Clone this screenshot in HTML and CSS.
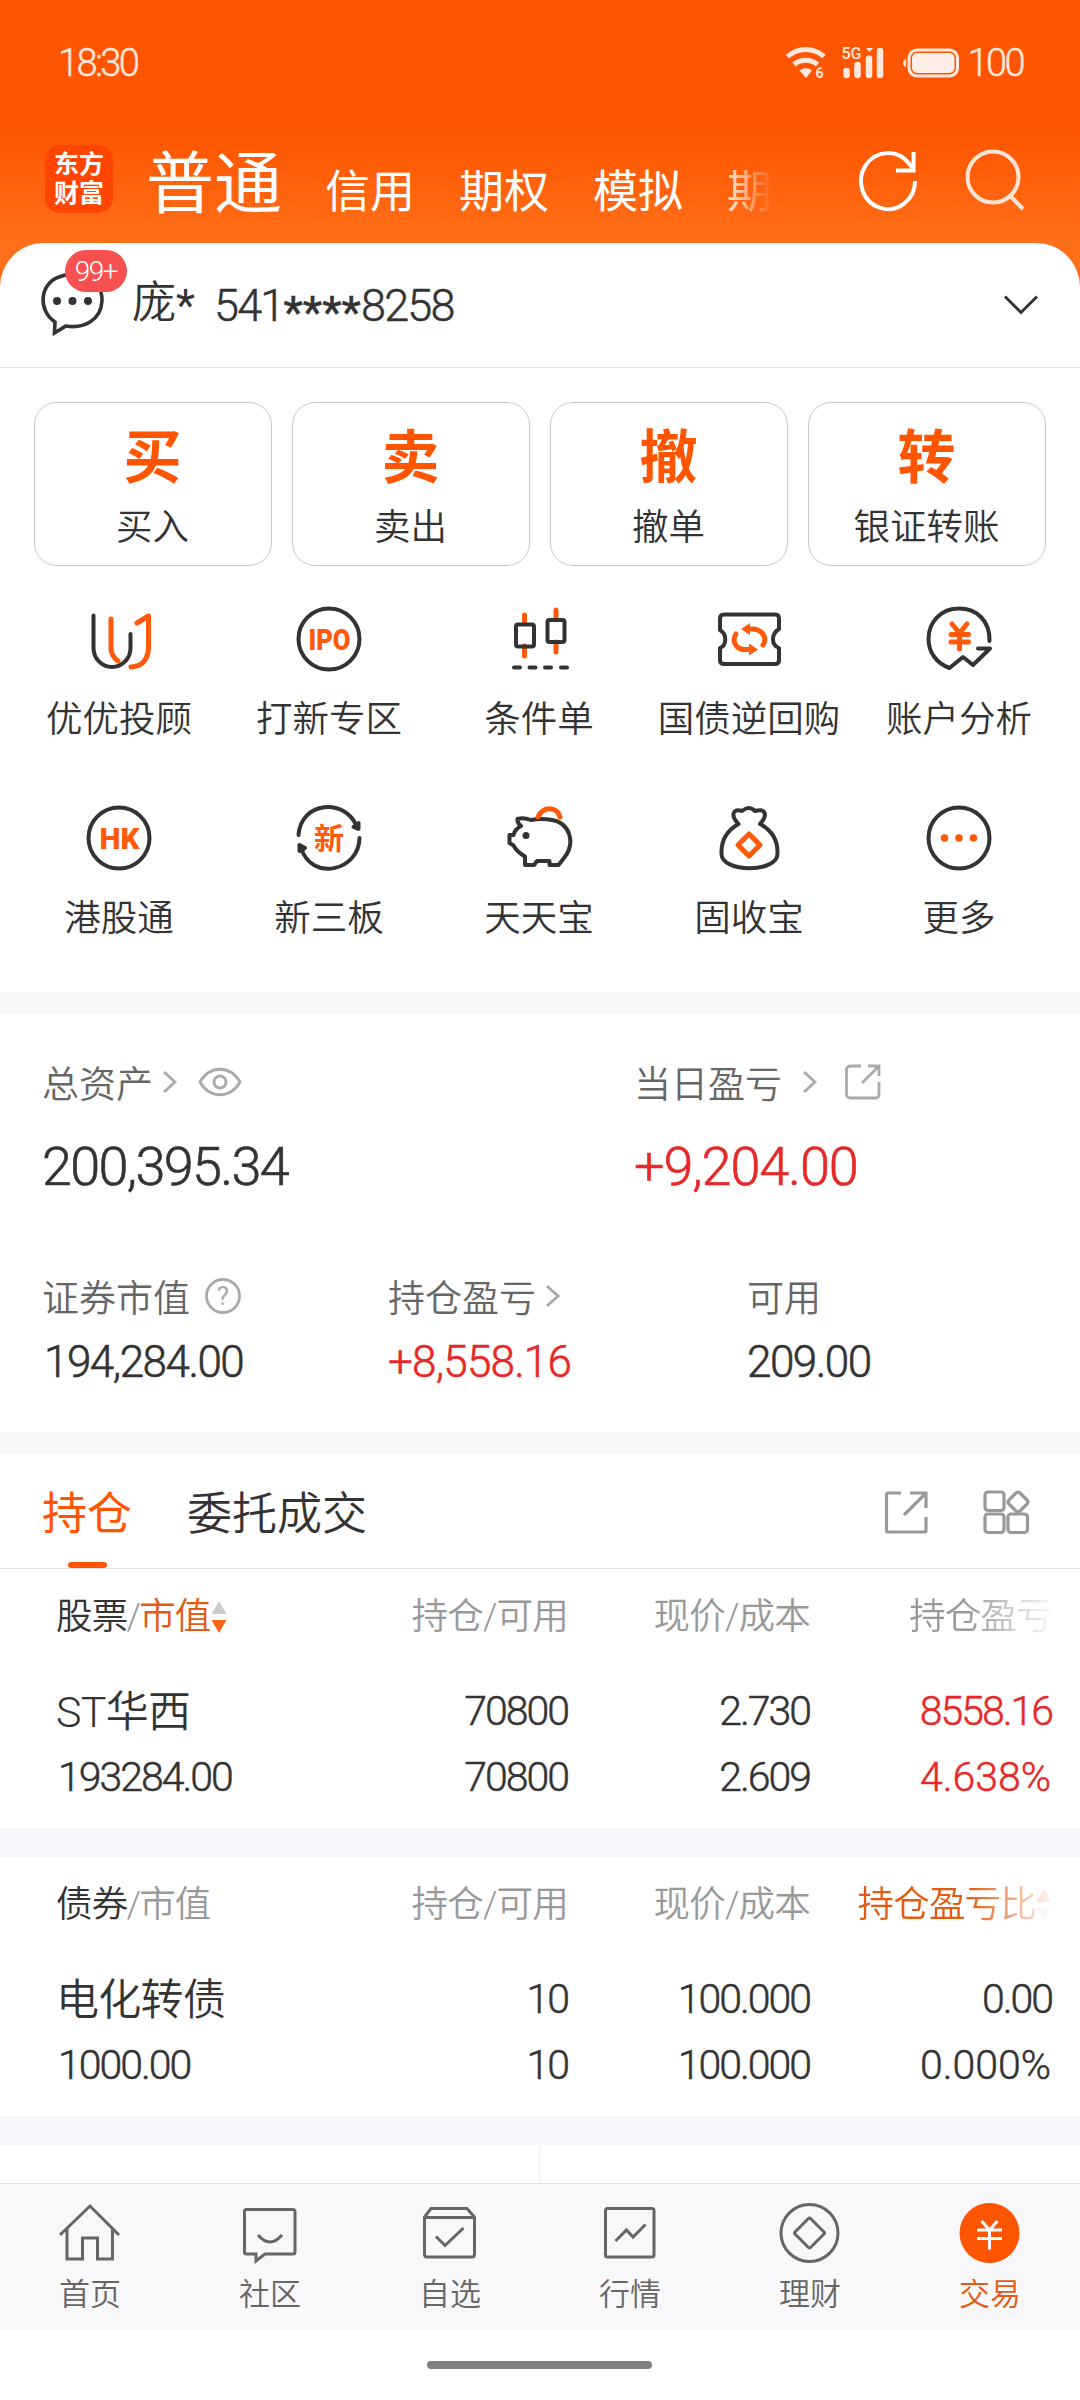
FILE: index.html
```html
<!DOCTYPE html>
<html lang="zh-CN">
<head>
    <meta charset="UTF-8">
    <meta name="viewport" content="width=device-width, initial-scale=1.0">
    <title>交易</title>
    <link rel="stylesheet" href="styles.css">
</head>
<body>
    <header class="header">
        <div class="status-bar">
            <span class="time">18:30</span>
            <div class="status-icons">
                <svg class="wifi" width="40" height="32" viewBox="0 0 40 32">
                    <g fill="none" stroke="#ffe9de" stroke-width="5">
                        <path d="M1.5 9.5A27 27 0 0 1 38 9.5"/>
                        <path d="M8 17.5A18 18 0 0 1 31.500 17.5"/>
                    </g>
                    <path d="M13.500 23.500Q20 19 26 23.500L20 31Z" fill="#ffe9de"/>
                    <text x="29.500" y="31" class="wifi-num">6</text>
                </svg>
                <svg class="signal" width="42" height="32" viewBox="0 0 42 32">
                    <text x="-.5" y="12" class="net">5G</text>
                    <path d="M24 1h7l-3.500 4z" fill="#ffe9de"/>
                    <g stroke="#ffe9de" stroke-width="6.500" stroke-linecap="round">
                        <path d="M4.500 24v4M15.500 18v10M27 11.500v16.500M38 4v24"/>
                    </g>
                </svg>
                <svg class="battery" width="57" height="30" viewBox="0 0 57 30">
                    <path d="M3 11v8q-3-1-3-4t3-4z" fill="#ffe9de"/>
                    <rect x="6" y="2" width="48.500" height="26" rx="8" fill="none" stroke="#ffe9de" stroke-width="3"/>
                    <rect x="9" y="5" width="42.500" height="20" rx="5" fill="#ffede6"/>
                </svg>
                <span class="time">100</span>
            </div>
        </div>
        <div class="top-nav">
            <div class="logo">东方<br>财富</div>
            <nav class="markets">
                <span class="market current">普通</span>
                <span class="market">信用</span>
                <span class="market">期权</span>
                <span class="market">模拟</span>
                <span class="market fade">期</span>
            </nav>
            <svg class="refresh" width="60" height="62" viewBox="0 0 60 62" fill="none" stroke="#fff" stroke-width="4">
                <path d="M57 32A27 28 0 1 1 51 14.500L56 20.500"/>
                <path d="M55.500 3V21.500H38"/>
            </svg>
            <svg class="search" width="60" height="62" viewBox="0 0 60 62" fill="none" stroke="#ffe4d6" stroke-width="4">
                <circle cx="28" cy="28" r="25.500"/>
                <path d="M45.500 47L58 60"/>
            </svg>
        </div>
    </header>

    <main class="panel">
        <div class="account">
            <div class="message">
                <svg width="64" height="64" viewBox="0 0 64 64">
                    <path d="M14 49C-3 38-2 11 18 4C40-5 62 8 61 28C60 47 43 56 25 53L13.500 60Z" fill="none" stroke="#333" stroke-width="3.600"/>
                    <g fill="#333"><circle cx="16" cy="28" r="4"/><circle cx="31.500" cy="28" r="4"/><circle cx="47" cy="28" r="4"/></g>
                </svg>
                <span class="badge">99+</span>
            </div>
            <span class="account-name">庞<i>*</i></span>
            <span class="account-no">541<i>****</i>8258</span>
            <svg class="chevron" width="36" height="22" viewBox="0 0 36 22"><path d="M2 2.500L18 18.500L34 2.500" fill="none" stroke="#333" stroke-width="3"/></svg>
        </div>

        <div class="trade-cards">
            <div class="trade-card"><b>买</b><span>买入</span></div>
            <div class="trade-card"><b>卖</b><span>卖出</span></div>
            <div class="trade-card"><b>撤</b><span>撤单</span></div>
            <div class="trade-card"><b>转</b><span>银证转账</span></div>
        </div>

        <div class="menu">
            <div class="menu-item">
                <svg viewBox="0 0 72 72" class="icon">
                    <path d="M10.500 12.500V45A18.500 19 0 0 0 47.500 45V31"/>
                    <path class="o" d="M28 16V45Q28 53 35 58M54 20L65.500 13V44Q65 63 48 64"/>
                </svg>
                <span>优优投顾</span>
            </div>
            <div class="menu-item">
                <svg viewBox="0 0 72 72" class="icon">
                    <circle cx="36" cy="36" r="30.500"/>
                    <text x="36.500" y="47" textLength="42" lengthAdjust="spacingAndGlyphs">IPO</text>
                </svg>
                <span>打新专区</span>
            </div>
            <div class="menu-item">
                <svg viewBox="0 0 72 72" class="icon">
                    <path class="o" d="M21.500 12V20M21.500 43V53M53 7V16M53 39V49"/>
                    <rect x="13" y="21.500" width="18" height="22" rx="2"/>
                    <rect x="44.500" y="17" width="17" height="22" rx="2"/>
                    <path d="M11 64.500h6M26.500 64.500h6M42 64.500h6M58 64.500h6"/>
                </svg>
                <span>条件单</span>
            </div>
            <div class="menu-item">
                <svg viewBox="0 0 72 72" class="icon">
                    <path d="M11 11.500H62Q66 11.500 66 15.500V26C58 31 58 42 66 45V57Q66 61 62 61H11Q7 61 7 57V45C14 42 14 31 7 27V15.500Q7 11.500 11 11.500Z"/>
                    <path class="o" d="M34 26H40C51 27 54 36 50 42M23 31C18 39 24 47 32 46.500H37"/>
                    <path class="f" d="M28 26L37 20V32ZM45 46.500L36 40.500V52.500Z"/>
                </svg>
                <span>国债逆回购</span>
            </div>
            <div class="menu-item">
                <svg viewBox="0 0 72 72" class="icon">
                    <path d="M66.500 38C67 18 54 5.500 36 5.500C18 5.500 5.500 19 5.500 36C5.500 49 13 60 26.500 65L40 54L50 62L67 45.500H55"/>
                    <path class="o" d="M29 21L36.500 30L44 21M28 31.500H45.500M28 39H45.500M36.500 30V46"/>
                </svg>
                <span>账户分析</span>
            </div>
            <div class="menu-item">
                <svg viewBox="0 0 72 72" class="icon">
                    <circle cx="36" cy="36" r="30.500"/>
                    <text x="36.500" y="47" textLength="40" lengthAdjust="spacingAndGlyphs">HK</text>
                </svg>
                <span>港股通</span>
            </div>
            <div class="menu-item">
                <svg viewBox="0 0 72 72" class="icon">
                    <path d="M5.500 33C8 -1 52-4 63.500 24M66.500 36C66 69 19 80 8 46"/>
                    <path d="M60.500 25L65.500 21V27ZM6.500 43V49L12 46Z"/>
                    <text x="36" y="47" class="cn">新</text>
                </svg>
                <span>新三板</span>
            </div>
            <div class="menu-item">
                <svg viewBox="0 0 72 72" class="icon">
                    <path d="M14.500 17Q20 15 28 18Q38 16 49 18C67 21 73 41 61 56L55.500 63H46.500V59H34L31 63H22V54.500Q14 50 10.500 43.500L6.500 41V33H10.500Q12 27 18 24Q14 21 14.500 17Z"/>
                    <path class="o" d="M35 15C40 4 54 4 57 15"/>
                    <circle cx="23" cy="33.500" r="3.500" class="d"/>
                </svg>
                <span>天天宝</span>
            </div>
            <div class="menu-item">
                <svg viewBox="0 0 72 72" class="icon">
                    <path d="M25.500 22C17 13 20 6 29 9Q36 3 42 9C53 6 55 13 47 22C60 29 65 40 64.500 52C64 71 9 71 8.500 52C8 40 13 29 25.500 22Z"/>
                    <path class="o" d="M36 32L47 43L36 54L25 43Z"/>
                </svg>
                <span>固收宝</span>
            </div>
            <div class="menu-item">
                <svg viewBox="0 0 72 72" class="icon">
                    <circle cx="36" cy="36" r="30.500"/>
                    <circle class="f" cx="21.500" cy="36" r="3.800"/>
                    <circle class="f" cx="36" cy="36" r="3.800"/>
                    <circle class="f" cx="50.500" cy="36" r="3.800"/>
                </svg>
                <span>更多</span>
            </div>
        </div>
    </main>

    <section class="assets">
        <div class="asset-row main-row">
            <div class="asset">
                <div class="asset-label">总资产
                    <svg class="arrow" width="16" height="24" viewBox="0 0 16 24"><path d="M2 2L13 12L2 22"/></svg>
                    <svg class="eye" width="44" height="32" viewBox="0 0 44 32"><path d="M2 16C12-1 32-1 42 16C32 33 12 33 2 16Z"/><circle cx="22" cy="16" r="6"/></svg>
                </div>
                <div class="asset-value">200,395.34</div>
            </div>
            <div class="asset">
                <div class="asset-label">当日盈亏
                    <svg class="arrow wide" width="16" height="24" viewBox="0 0 16 24"><path d="M2 2L13 12L2 22"/></svg>
                    <svg class="share" width="38" height="38" viewBox="0 0 38 38"><path d="M17 3H7Q2.500 3 2.500 7V31Q2.500 35 7 35H31Q35 35 35 31V19M24 3H35V13M35 3L18 20"/></svg>
                </div>
                <div class="asset-value red">+9,204.00</div>
            </div>
        </div>
        <div class="asset-row sub-row">
            <div class="asset">
                <div class="asset-label">证券市值
                    <svg class="help" width="38" height="38" viewBox="0 0 38 38"><circle cx="19" cy="19" r="16.500"/><text x="19" y="28">?</text></svg>
                </div>
                <div class="asset-value first">194,284.00</div>
            </div>
            <div class="asset">
                <div class="asset-label">持仓盈亏
                    <svg class="arrow" width="16" height="24" viewBox="0 0 16 24"><path d="M2 2L13 12L2 22"/></svg>
                </div>
                <div class="asset-value red">+8,558.16</div>
            </div>
            <div class="asset">
                <div class="asset-label">可用</div>
                <div class="asset-value">209.00</div>
            </div>
        </div>
    </section>

    <section class="holdings">
        <div class="tabs">
            <span class="tab active">持仓</span>
            <span class="tab">委托成交</span>
            <svg class="tab-share" width="44" height="44" viewBox="0 0 44 44"><path d="M17 3H4Q2.500 3 2.500 4.500V40.500Q2.500 42 4 42H40.500Q42 42 42 40.500V27M26 3H42V18M42 3L20 25"/></svg>
            <svg class="tab-grid" width="48" height="46" viewBox="0 0 48 46">
                <rect x="3" y="3" width="19" height="18.500" rx="3"/><rect x="3" y="25" width="19" height="18.500" rx="3"/><rect x="26" y="25" width="19.500" height="18.500" rx="3"/>
                <path d="M34 4Q36 2 38 4L45 11Q47 13 45 15L38 22Q36 24 34 22L27 15Q25 13 27 11Z"/>
            </svg>
        </div>
        <div class="table">
            <div class="row head">
                <div><span class="dark">股票</span><span class="slash">/</span><span class="orange">市值</span><svg class="sort" width="16" height="34" viewBox="0 0 16 34"><path d="M8 1L15.500 14H.5Z" fill="#ccc"/><path d="M8 33L15.500 20H.5Z" fill="#f9641a"/></svg></div>
                <div>持仓/可用</div>
                <div>现价/成本</div>
                <div class="fade-right">持仓盈亏</div>
            </div>
            <div class="row">
                <div class="name">ST华西</div><div>70800</div><div>2.730</div><div class="red">8558.16</div>
            </div>
            <div class="row second">
                <div class="amount">193284.00</div><div>70800</div><div>2.609</div><div class="percent red">4.638%</div>
            </div>
        </div>
        <div class="table">
            <div class="row head">
                <div><span class="dark">债券</span><span class="slash">/</span>市值</div>
                <div>持仓/可用</div>
                <div>现价/成本</div>
                <div class="fade-right orange">持仓盈亏比<svg class="sort" width="16" height="34" viewBox="0 0 16 34"><path d="M8 1L15.500 14H.5Z" fill="#f9641a"/><path d="M8 33L15.500 20H.5Z" fill="#ccc"/></svg></div>
            </div>
            <div class="row">
                <div class="name">电化转债</div><div>10</div><div>100.000</div><div>0.00</div>
            </div>
            <div class="row second">
                <div class="amount">1000.00</div><div>10</div><div>100.000</div><div class="percent">0.000%</div>
            </div>
        </div>
        <div class="more-row"><div></div><div></div></div>
    </section>

    <footer class="tab-bar">
        <div class="bar-item">
            <svg viewBox="0 0 64 64"><path d="M2 34L32 5L61 34M9 28V58H24.500V37H39.500V58H54.500V28"/></svg>
            <span>首页</span>
        </div>
        <div class="bar-item">
            <svg viewBox="0 0 64 64"><path d="M8.500 8.500H55Q57 8.500 57 10.500V51Q57 53 55 53H27L18 60V53H8.500Q6.500 53 6.500 51V10.500Q6.500 8.500 8.500 8.500ZM20 34Q32 48 44 34"/></svg>
            <span>社区</span>
        </div>
        <div class="bar-item">
            <svg viewBox="0 0 64 64"><path d="M13 7.500H49L56.500 16V53Q56.500 56 54 56H9Q6.500 56 6.500 53V16ZM6.500 16.500H56.500M18 35.500L27 44.500L45.500 27"/></svg>
            <span>自选</span>
        </div>
        <div class="bar-item">
            <svg viewBox="0 0 64 64"><rect x="7.500" y="7.500" width="48.500" height="48.500" rx="2"/><path d="M17.500 40L28.500 29L35 36L47.500 23.500"/></svg>
            <span>行情</span>
        </div>
        <div class="bar-item">
            <svg viewBox="0 0 64 64"><circle cx="31.500" cy="32" r="28.500"/><rect x="20.500" y="21" width="22" height="22" rx="1.500" transform="rotate(45 31.500 32)"/></svg>
            <span>理财</span>
        </div>
        <div class="bar-item on">
            <svg viewBox="0 0 64 64"><circle cx="31.500" cy="32" r="30" fill="#f50" stroke="none"/><path stroke="#fff" d="M23.500 20L31.500 29L39.500 20M19 29H44M19 37.500H44M31.500 29V48.500"/></svg>
            <span>交易</span>
        </div>
    </footer>
    <div class="home-indicator"></div>
</body>
</html>
```
FILE: styles.css
```css
* {
    box-sizing: border-box;
}

body {
    margin: 0;
    width: 1080px;
    height: 2400px;
    overflow: hidden;
    background-color: #fff;
    color: #333;
    font-family: Roboto, "Noto Sans CJK SC", sans-serif;
    font-weight: 350;
}

svg {
    display: block;
    flex-shrink: 0;
    overflow: visible;
}

i {
    font-style: normal;
}

.red {
    color: #e62828;
}

.orange {
    color: #e35a10;
}

.dark {
    color: #333;
}

/* header */
.header {
    height: 290px;
    background: linear-gradient(#ff5500 0, #ff5500 130px, #ff6f1a 243px);
}

.status-bar {
    display: flex;
    justify-content: space-between;
    height: 126px;
    padding: 0 57px 0 58px;
    color: #ffe9de;
}

.time {
    font-size: 38px;
    line-height: 126px;
    letter-spacing: -2.6px;
    -webkit-text-stroke: .4px;
}

.status-icons {
    display: flex;
    align-items: center;
}

.wifi {
    margin-right: 16px;
}

.signal {
    margin-right: 19px;
}

.battery {
    margin-right: 8px;
}

.wifi-num {
    font-size: 14px;
    font-weight: 700;
    fill: #ffe9de;
}

.net {
    font-size: 16px;
    font-weight: 500;
    fill: #ffe9de;
}

.top-nav {
    display: flex;
    align-items: flex-start;
    height: 117px;
    padding: 19px 0 0 45px;
    color: #fff;
}

.logo {
    width: 68px;
    height: 68px;
    padding-top: 5px;
    border-radius: 15px;
    background-color: #ff4500;
    font-size: 25px;
    font-weight: 700;
    line-height: 29px;
    text-align: center;
}

.markets {
    display: flex;
    align-items: baseline;
    width: 745px;
    padding: 6px 0 0 33px;
    line-height: 68px;
    font-weight: 400;
}

.market {
    margin-right: 44px;
    font-size: 45px;
}

.market.current {
    margin-right: 43px;
    font-size: 68px;
}

.market.fade {
    margin-right: 0;
    -webkit-mask-image: linear-gradient(90deg, rgba(0, 0, 0, .85), transparent);
    mask-image: linear-gradient(90deg, rgba(0, 0, 0, .85), transparent);
}

.refresh {
    margin: 4px 47px 0 0;
}

.search {
    margin-top: 4px;
}

/* white panel */
.panel {
    height: 749px;
    margin-top: -47px;
    border-radius: 44px 44px 0 0;
    background-color: #fff;
}

.account {
    display: flex;
    align-items: center;
    height: 125px;
    padding: 0 41px;
    border-bottom: 1px solid #e2e2e2;
    font-size: 45px;
}

.message {
    position: relative;
    width: 91px;
}

.badge {
    position: absolute;
    left: 24px;
    top: -23px;
    width: 62px;
    height: 42px;
    border-radius: 21px;
    background-color: #f75050;
    color: #fff;
    font-size: 28px;
    line-height: 43px;
    text-align: center;
    letter-spacing: -1.5px;
}

.account i {
    font-weight: 400;
    vertical-align: -7px;
}

.account-name {
    width: 82px;
    font-size: 44px;
    line-height: 60px;
    padding-bottom: 2px;
    white-space: nowrap;
}

.account-name i {
    vertical-align: -3px;
}

.account-no {
    padding-top: 7px;
    letter-spacing: -1.8px;
    -webkit-text-stroke: .5px;
}

.account-no i {
    letter-spacing: 0;
}

.chevron {
    margin-left: auto;
}

.trade-cards {
    display: grid;
    grid-template-columns: repeat(4, 238px);
    gap: 20px;
    padding: 34px 34px 0;
}

.trade-card {
    display: flex;
    flex-direction: column;
    align-items: center;
    height: 164px;
    padding: 20px 1px 0 0;
    border: 1px solid #c8c8c8;
    border-radius: 23px;
    font-size: 36.500px;
    line-height: 50px;
}

.trade-card b {
    height: 70px;
    margin-bottom: 10px;
    color: #f50;
    font-size: 58px;
    line-height: 70px;
    font-weight: 700;
}

.menu {
    display: grid;
    grid-template-columns: repeat(5, 210px);
    grid-auto-rows: 199px;
    padding: 37px 14px 0;
}

.menu-item {
    display: flex;
    flex-direction: column;
    align-items: center;
    font-size: 36.500px;
    line-height: 50px;
    white-space: nowrap;
}

.icon {
    width: 72px;
    height: 72px;
    margin-bottom: 20px;
    fill: none;
    stroke: #333;
    stroke-width: 4;
    stroke-linecap: round;
    stroke-linejoin: round;
}

.icon .o {
    stroke: #ff5a0a;
    stroke-width: 5;
}

.icon .f {
    fill: #ff5a0a;
    stroke: none;
}

.icon .d {
    fill: #333;
    stroke: none;
}

.icon text {
    fill: #ff5a0a;
    stroke: none;
    font-size: 30px;
    font-weight: 900;
    text-anchor: middle;
}

.icon .cn {
    font-weight: 700;
}

/* assets */
.assets {
    height: 463px;
    border-top: 23px solid #f7f7fa;
    border-bottom: 23px solid #f7f7fa;
}

.asset-row {
    display: grid;
    padding-left: 42px;
}

.main-row {
    grid-template-columns: 592px 1fr;
    padding-top: 42px;
}

.sub-row {
    grid-template-columns: 346px 359px 1fr;
    padding-top: 74px;
}

.asset-label {
    display: flex;
    align-items: center;
    height: 50px;
    color: #666;
    font-size: 37px;
}

.asset-label svg {
    fill: none;
    stroke: #aaa;
    stroke-width: 2.800;
}

.arrow {
    margin-left: 9px;
}

.arrow.wide {
    margin-left: 20px;
}

.eye {
    margin-left: 20px;
}

.share {
    margin-left: 26px;
}

.help {
    margin-left: 14px;
}

.help text {
    fill: #aaa;
    stroke: none;
    font-size: 26px;
    font-weight: 400;
    text-anchor: middle;
}

.asset-value {
    height: 60px;
    font-size: 44px;
    line-height: 60px;
    letter-spacing: -1.500px;
    -webkit-text-stroke: .6px;
}

.asset-value.first {
    padding-left: 2px;
}

.asset-value.red {
    letter-spacing: -.8px;
}

.main-row .asset-value {
    margin-top: 30px;
    font-size: 54px;
    letter-spacing: -1.700px;
}

.main-row .asset-value.red {
    letter-spacing: -1.100px;
}

.sub-row .asset-value {
    margin-top: 11px;
}

/* holdings */
.holdings {
    height: 728px;
}

.tabs {
    display: flex;
    align-items: center;
    height: 114px;
    padding: 0 50px 0 42px;
    border-bottom: 1px solid #ddd;
    font-size: 45px;
}

.tab {
    height: 113px;
    margin-right: 55px;
    line-height: 119px;
}

.tab.active {
    display: flex;
    flex-direction: column;
    align-items: center;
    color: #f50;
    font-weight: 400;
}

.tab.active::after {
    content: "";
    width: 39px;
    height: 6px;
    margin-top: -12px;
    border-radius: 3px;
    background-color: #f50;
}

.tabs svg {
    fill: none;
    stroke: #999;
    stroke-width: 3.200;
}

.tab-share {
    margin: 0 54px 0 auto;
}

.table {
    height: 288px;
    padding-top: 1px;
    border-bottom: 29px solid #f6f7fa;
}

.row {
    display: grid;
    grid-template-columns: 300px 212px 242px 242px;
    height: 66px;
    padding-left: 56px;
    font-size: 41px;
    line-height: 66px;
    letter-spacing: -2px;
    text-align: right;
    white-space: nowrap;
    -webkit-text-stroke: .5px;
}

.row > div:first-child {
    text-align: left;
}

.row.head {
    height: 108px;
    color: #999;
    font-size: 36.500px;
    line-height: 94px;
    letter-spacing: -.8px;
    -webkit-text-stroke: 0;
}

.row.head > div {
    display: flex;
    justify-content: flex-end;
    align-items: center;
    height: 94px;
}

.row.head > div:first-child {
    justify-content: flex-start;
}

.slash {
    margin: 0 -1px;
}

.row .name {
    font-size: 43px;
    line-height: 68px;
    letter-spacing: -.7px;
    -webkit-text-stroke: 0;
}

.row .amount {
    padding-left: 2px;
}

.row .percent {
    letter-spacing: 0;
    padding-right: 1px;
}

.fade-right {
    -webkit-mask-image: linear-gradient(90deg, #000 65%, transparent 102%);
    mask-image: linear-gradient(90deg, #000 65%, transparent 102%);
}

.more-row {
    display: grid;
    grid-template-columns: 1fr 1fr;
    height: 38px;
}

.more-row div:first-child {
    border-right: 1px solid #eee;
}

/* bottom bar */
.tab-bar {
    display: grid;
    grid-template-columns: repeat(6, 180px);
    height: 147px;
    border-top: 1px solid #ddd;
    background-color: #f8f8fa;
    color: #666;
    font-size: 31px;
    line-height: 44px;
}

.bar-item {
    display: flex;
    flex-direction: column;
    align-items: center;
    padding-top: 17px;
}

.bar-item svg {
    width: 64px;
    height: 64px;
    margin-bottom: 8px;
    fill: none;
    stroke: #666;
    stroke-width: 3;
}

.bar-item.on {
    color: #e35a10;
}

.home-indicator {
    width: 225px;
    height: 8px;
    margin: 31px 0 0 427px;
    border-radius: 4px;
    background-color: #808080;
}
```
